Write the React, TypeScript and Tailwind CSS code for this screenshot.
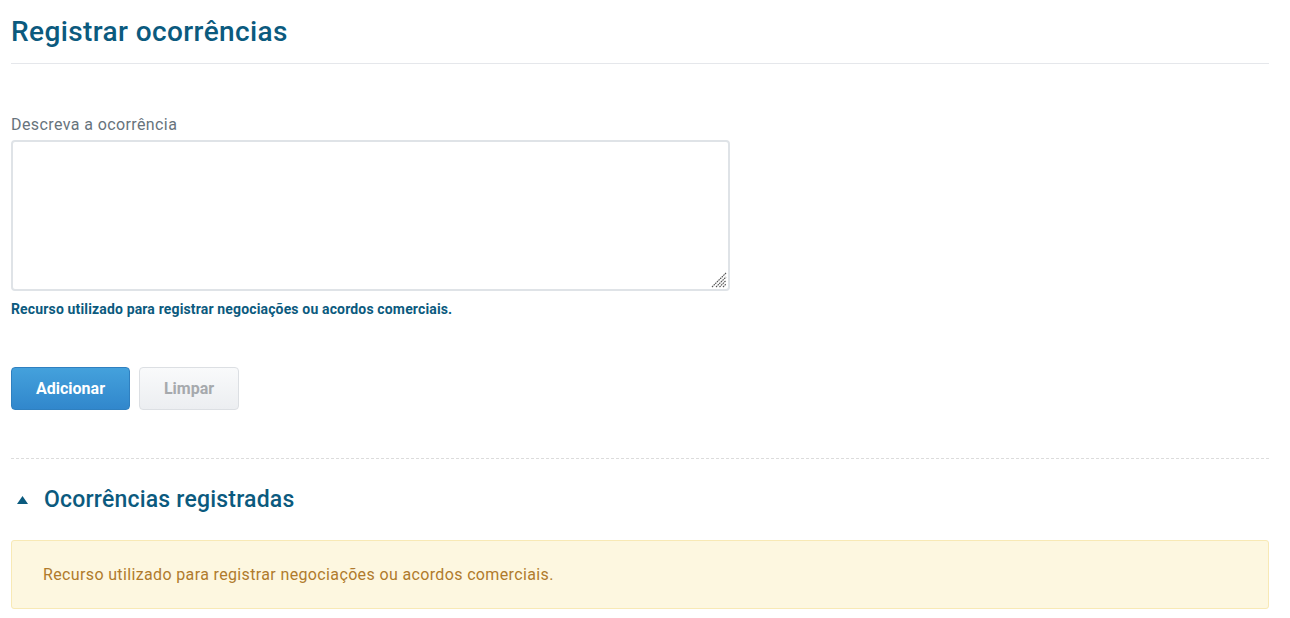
export default function App() {
  return (
    <div className="min-h-screen bg-white px-[11px] pt-[14px] font-['Roboto',sans-serif]">
      <div className="w-[1258px]">
        <h1 className="border-b border-[#e5e7eb] pb-[13px] text-[28px] font-medium leading-[36px] tracking-[0.4px] text-[#0b5a7e]">
          Registrar ocorrências
        </h1>

        <div className="mt-[50px] w-[719px]">
          <label className="block text-[16px] leading-[22px] tracking-[0.4px] text-[#67737c]">Descreva a ocorrência</label>
          <div className="relative mt-[4px]">
            <textarea className="block h-[151px] w-full resize-none rounded-[4px] border-2 border-[#dfe3e7] bg-white outline-none" />
            <svg width="16" height="16" viewBox="0 0 16 16" className="pointer-events-none absolute bottom-[3px] right-[3px]">
              <g stroke="#555" strokeWidth="1.1" strokeDasharray="1.6 0.7">
                <line x1="1" y1="15" x2="15" y2="1" />
                <line x1="5" y1="15" x2="15" y2="5" />
                <line x1="8.5" y1="15" x2="15" y2="8.5" />
                <line x1="12" y1="15" x2="15" y2="12" />
              </g>
            </svg>
          </div>
          <p className="mt-[9px] text-[14px] font-bold leading-[18px] tracking-[0.15px] text-[#0b5a7e]">
            Recurso utilizado para registrar negociações ou acordos comerciais.
          </p>
        </div>

        <div className="mt-[49px] flex gap-[9px]">
          <button className="h-[43px] w-[119px] rounded-[4px] border border-[#2f80c0] bg-gradient-to-b from-[#44a1dc] to-[#3187cc] text-[16px] font-bold text-white">
            Adicionar
          </button>
          <button className="h-[43px] w-[100px] rounded-[4px] border border-[#dcdfe3] bg-gradient-to-b from-[#f9fafb] to-[#eceef1] text-[16px] font-bold text-[#a6a9ad]">
            Limpar
          </button>
        </div>

        <div className="mt-[48px] border-t border-dashed border-[#dcdcdc]" />

        <div className="mt-[26px] flex items-center">
          <svg width="11" height="8" viewBox="0 0 11 8" className="ml-[6px] mr-[16px]">
            <polygon points="5.5,0 11,8 0,8" fill="#0b5a7e" />
          </svg>
          <h2 className="text-[23px] font-medium leading-[30px] tracking-[0.2px] text-[#0b5a7e]">Ocorrências registradas</h2>
        </div>

        <div className="mt-[25px] flex h-[69px] items-center rounded-[3px] border border-[#f8e9b5] bg-[#fdf7e0] px-[31px]">
          <span className="text-[16px] tracking-[0.36px] text-[#b07b2c]">Recurso utilizado para registrar negociações ou acordos comerciais.</span>
        </div>
      </div>
    </div>
  );
}
